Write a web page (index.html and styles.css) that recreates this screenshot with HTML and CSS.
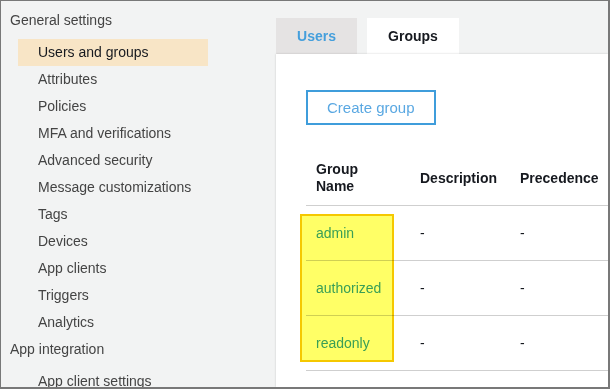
FILE: index.html
```html
<!DOCTYPE html>
<html lang="en">
<head>
    <meta charset="UTF-8">
    <title>User pool - Groups</title>
    <link rel="stylesheet" href="styles.css">
</head>
<body>
    <div class="frame">
        <nav class="sidebar">
            <div class="nav-heading">General settings</div>
            <ul class="nav-list">
                <li class="nav-item active">Users and groups</li>
                <li class="nav-item">Attributes</li>
                <li class="nav-item">Policies</li>
                <li class="nav-item">MFA and verifications</li>
                <li class="nav-item">Advanced security</li>
                <li class="nav-item">Message customizations</li>
                <li class="nav-item">Tags</li>
                <li class="nav-item">Devices</li>
                <li class="nav-item">App clients</li>
                <li class="nav-item">Triggers</li>
                <li class="nav-item">Analytics</li>
            </ul>
            <div class="nav-heading">App integration</div>
            <ul class="nav-list">
                <li class="nav-item">App client settings</li>
            </ul>
        </nav>

        <main class="main">
            <div class="tabs">
                <div class="tab">Users</div>
                <div class="tab selected">Groups</div>
            </div>
            <div class="panel">
                <button class="create-btn">Create group</button>
                <table class="groups-table">
                    <colgroup>
                        <col class="col-name">
                        <col class="col-desc">
                        <col>
                    </colgroup>
                    <thead>
                        <tr>
                            <th><span class="wrap">Group Name</span></th>
                            <th>Description</th>
                            <th>Precedence</th>
                        </tr>
                    </thead>
                    <tbody>
                        <tr>
                            <td><a class="group-link">admin</a></td>
                            <td>-</td>
                            <td>-</td>
                        </tr>
                        <tr>
                            <td><a class="group-link">authorized</a></td>
                            <td>-</td>
                            <td>-</td>
                        </tr>
                        <tr>
                            <td><a class="group-link">readonly</a></td>
                            <td>-</td>
                            <td>-</td>
                        </tr>
                    </tbody>
                </table>
                <div class="highlight"></div>
            </div>
        </main>
    </div>
</body>
</html>
```

FILE: styles.css
```css
/* Page frame */
body {
    margin: 0;
    padding: 0;
    font-family: "Liberation Sans", Arial, sans-serif;
}

.frame {
    width: 610px;
    height: 389px;
    box-sizing: border-box;
    border: 1px solid #787878;
    border-right-width: 2px;
    border-bottom-width: 2px;
    background: #f2f3f3;
    display: flex;
    overflow: hidden;
}

/* Sidebar */
.sidebar {
    width: 275px;
    flex-shrink: 0;
    padding-top: 6px;
    font-size: 14px;
    color: #444444;
}

.nav-heading {
    line-height: 27px;
    padding-left: 9px;
}

.nav-list {
    list-style: none;
    margin: 5px 0 0 0;
    padding: 0;
}

.nav-item {
    line-height: 27px;
    width: 190px;
    margin-left: 17px;
    padding-left: 20px;
    box-sizing: border-box;
    white-space: nowrap;
}

.nav-item.active {
    background: #f8e5c6;
    color: #16191f;
}

/* Main area */
.main {
    flex: 1;
    padding-top: 17px;
    display: flex;
    flex-direction: column;
}

.tabs {
    display: flex;
    gap: 10px;
}

.tab {
    width: 81px;
    height: 36px;
    line-height: 36px;
    text-align: center;
    font-size: 14px;
    font-weight: bold;
    color: #459fdc;
    background: #e5e3e3;
}

.tab.selected {
    width: 92px;
    color: #16191f;
    background: #ffffff;
}

.panel {
    flex: 1;
    position: relative;
    background: #ffffff;
    padding: 36px 0 0 30px;
    box-shadow: 0 0 2px rgba(0, 0, 0, 0.18);
}

.create-btn {
    display: block;
    height: 35px;
    padding: 0 19px;
    border: 2px solid #3f9ddb;
    background: #ffffff;
    color: #5aa8e2;
    font-family: "Liberation Sans", Arial, sans-serif;
    font-size: 15px;
    cursor: pointer;
}

/* Table */
.groups-table {
    margin-top: 26px;
    width: 100%;
    border-collapse: collapse;
    table-layout: fixed;
    font-size: 14px;
    color: #16191f;
}

.col-name {
    width: 104px;
}

.col-desc {
    width: 100px;
}

.groups-table th {
    text-align: left;
    font-weight: bold;
    line-height: 17px;
    padding: 10px 0 10px 10px;
    border-bottom: 1px solid #cfcfcf;
    white-space: nowrap;
}

.groups-table th .wrap {
    display: block;
    width: 60px;
    white-space: normal;
}

.groups-table td {
    height: 54px;
    padding: 0 0 0 10px;
    border-bottom: 1px solid #cfcfcf;
}

.group-link {
    color: #3a9fd6;
    cursor: pointer;
}

/* Annotation box over the group names */
.highlight {
    position: absolute;
    left: 24px;
    top: 160px;
    width: 94px;
    height: 148px;
    box-sizing: border-box;
    border: 2px solid #f5c800;
    background: #ffff66;
    mix-blend-mode: multiply;
    pointer-events: none;
}
```
